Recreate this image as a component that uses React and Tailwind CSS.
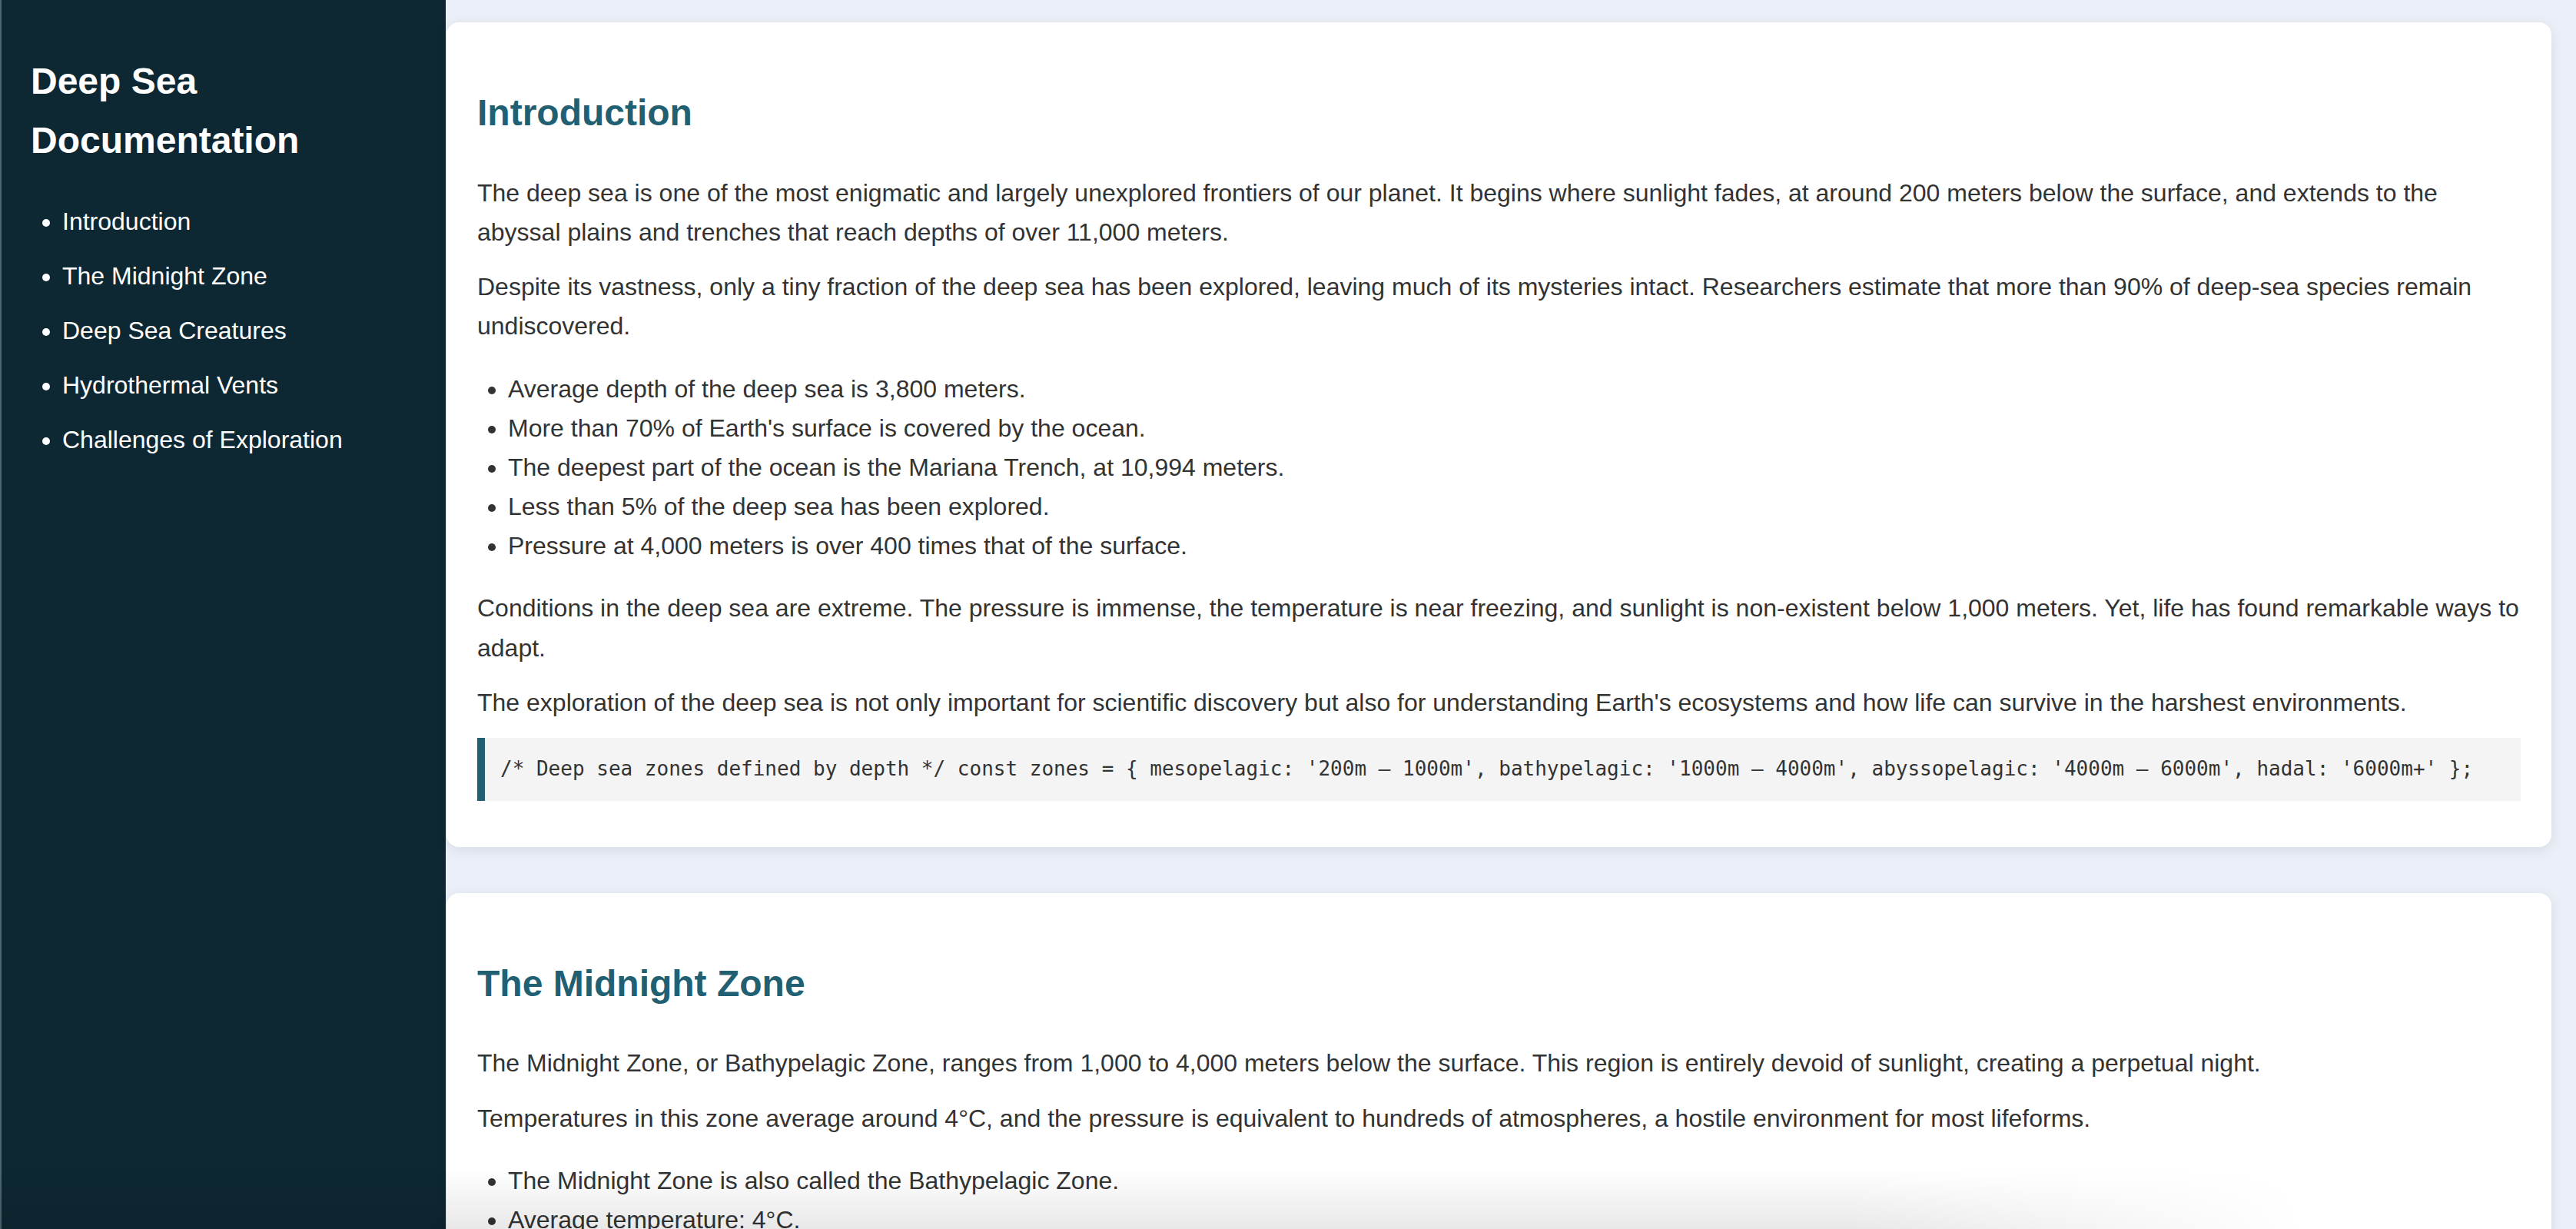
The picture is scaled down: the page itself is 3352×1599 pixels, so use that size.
import React from "react";

const sections = [
  {
    title: "Introduction",
    paras1: [
      "The deep sea is one of the most enigmatic and largely unexplored frontiers of our planet. It begins where sunlight fades, at around 200 meters below the surface, and extends to the abyssal plains and trenches that reach depths of over 11,000 meters.",
      "Despite its vastness, only a tiny fraction of the deep sea has been explored, leaving much of its mysteries intact. Researchers estimate that more than 90% of deep-sea species remain undiscovered.",
    ],
    list: [
      "Average depth of the deep sea is 3,800 meters.",
      "More than 70% of Earth's surface is covered by the ocean.",
      "The deepest part of the ocean is the Mariana Trench, at 10,994 meters.",
      "Less than 5% of the deep sea has been explored.",
      "Pressure at 4,000 meters is over 400 times that of the surface.",
    ],
    paras2: [
      "Conditions in the deep sea are extreme. The pressure is immense, the temperature is near freezing, and sunlight is non-existent below 1,000 meters. Yet, life has found remarkable ways to adapt.",
      "The exploration of the deep sea is not only important for scientific discovery but also for understanding Earth's ecosystems and how life can survive in the harshest environments.",
    ],
    code:
      "/* Deep sea zones defined by depth */ const zones = { mesopelagic: '200m \u2013 1000m', bathypelagic: '1000m \u2013 4000m', abyssopelagic: '4000m \u2013 6000m', hadal: '6000m+' };",
  },
  {
    title: "The Midnight Zone",
    paras1: [
      "The Midnight Zone, or Bathypelagic Zone, ranges from 1,000 to 4,000 meters below the surface. This region is entirely devoid of sunlight, creating a perpetual night.",
      "Temperatures in this zone average around 4\u00b0C, and the pressure is equivalent to hundreds of atmospheres, a hostile environment for most lifeforms.",
    ],
    list: [
      "The Midnight Zone is also called the Bathypelagic Zone.",
      "Average temperature: 4\u00b0C.",
      "No sunlight penetrates this depth.",
      "Many creatures here produce their own light through bioluminescence.",
    ],
    paras2: [
      "Animals in the Midnight Zone have adapted with slow metabolisms, large eyes or no eyes at all, and the ability to survive on scarce food falling from above.",
    ],
    code:
      "/* Bioluminescence example */ const anglerfish = { lure: 'bioluminescent', depth: '1000m \u2013 4000m' };",
  },
  {
    title: "Deep Sea Creatures",
    paras1: [
      "The deep sea is home to some of the most unusual creatures on Earth, from the anglerfish to the giant squid and the vampire squid.",
    ],
    list: [
      "Anglerfish use a glowing lure to attract prey.",
      "Giant squid can grow up to 13 meters long.",
      "The vampire squid lives in oxygen-minimum zones.",
    ],
    paras2: [],
    code: null,
  },
  {
    title: "Hydrothermal Vents",
    paras1: [
      "Hydrothermal vents are fissures on the seafloor that release geothermally heated water, supporting unique ecosystems based on chemosynthesis.",
    ],
    list: [],
    paras2: [],
    code: null,
  },
  {
    title: "Challenges of Exploration",
    paras1: [
      "Exploring the deep sea requires specialized vehicles able to withstand crushing pressure, total darkness, and near-freezing temperatures.",
    ],
    list: [],
    paras2: [],
    code: null,
  },
];

const navItems = [
  "Introduction",
  "The Midnight Zone",
  "Deep Sea Creatures",
  "Hydrothermal Vents",
  "Challenges of Exploration",
];

function Section({ s }) {
  return (
    <section className="bg-white rounded-2xl p-[40px] mb-[60px] shadow-[0_4px_18px_rgba(0,0,0,0.09)]">
      <h2 className="text-[48px] leading-[1.6] font-bold text-[#215f73] my-[40px]">
        {s.title}
      </h2>
      {s.paras1.map((p, i) => (
        <p key={i} className="my-[20px]">
          {p}
        </p>
      ))}
      {s.list.length > 0 && (
        <ul className="list-disc pl-[40px] my-[30px]">
          {s.list.map((l, i) => (
            <li key={i}>{l}</li>
          ))}
        </ul>
      )}
      {s.paras2.map((p, i) => (
        <p key={i} className="my-[20px]">
          {p}
        </p>
      ))}
      {s.code && (
        <pre className="my-[20px] bg-[#f4f4f4] border-l-[10px] border-[#215f73] py-[20px] pl-[20px] pr-[20px] font-['DejaVu_Sans_Mono',monospace] text-[26px] leading-[1.6] text-[#333] whitespace-pre-wrap">
          {s.code}
        </pre>
      )}
    </section>
  );
}

export default function App() {
  return (
    <div className="flex min-h-screen bg-[#ebf0f8] font-['Liberation_Sans',Arial,sans-serif] text-[32px] leading-[1.6] text-[#333]">
      <aside className="w-[580px] shrink-0 bg-[#0e2833] border-l-2 border-[#50646b] pl-[38px] pr-[40px] pt-[68px] text-white">
        <div className="sticky top-[68px]">
          <h1 className="text-[48px] leading-[1.6] font-bold mb-[41px]">
            Deep Sea Documentation
          </h1>
          <ul className="list-disc pl-[41px]">
            {navItems.map((n) => (
              <li key={n} className="mb-[20px]">
                <a href="#" className="text-white">
                  {n}
                </a>
              </li>
            ))}
          </ul>
        </div>
      </aside>
      <main className="flex-1 pt-[29px] pl-px pr-[32px]">
        {sections.map((s) => (
          <Section key={s.title} s={s} />
        ))}
      </main>
      <div className="fixed bottom-0 left-0 w-[3000px] h-[78px] pointer-events-none bg-gradient-to-b from-transparent to-black/[0.09] [mask-image:linear-gradient(to_right,black_80%,transparent)]" />
    </div>
  );
}
